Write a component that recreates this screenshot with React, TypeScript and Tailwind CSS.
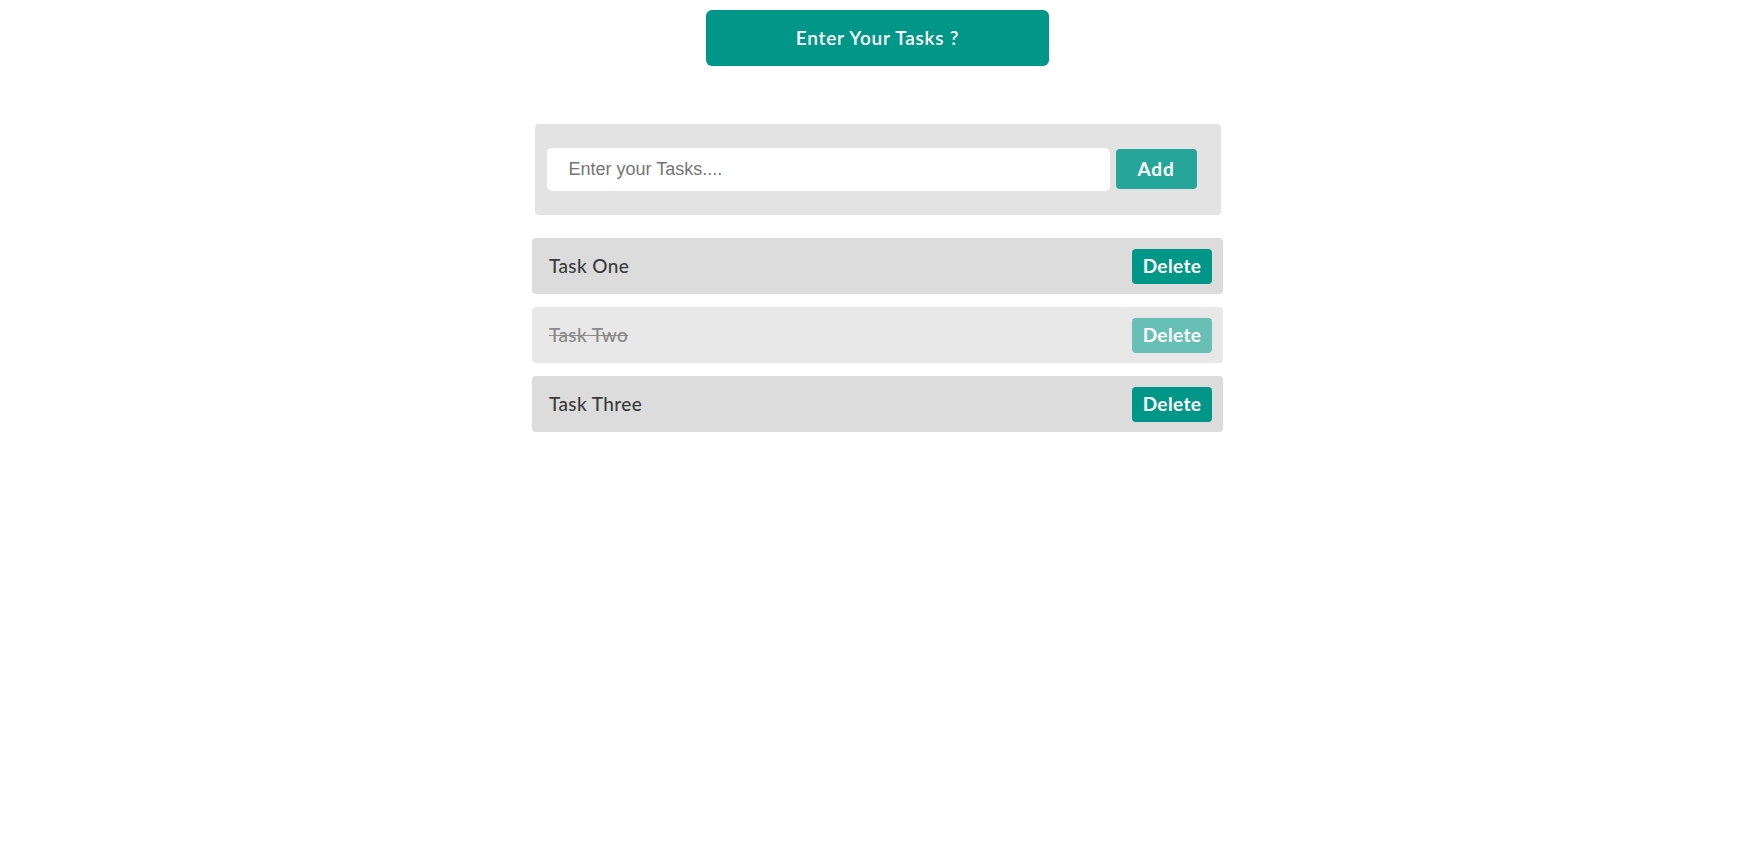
import { useState } from 'react'

interface Task {
  id: number
  text: string
  done: boolean
}

const initialTasks: Task[] = [
  { id: 1, text: 'Task One', done: false },
  { id: 2, text: 'Task Two', done: true },
  { id: 3, text: 'Task Three', done: false },
]

export default function App() {
  const [tasks, setTasks] = useState<Task[]>(initialTasks)
  const [value, setValue] = useState('')

  const addTask = () => {
    if (!value.trim()) return
    setTasks([...tasks, { id: Date.now(), text: value.trim(), done: false }])
    setValue('')
  }

  return (
    <div className="min-h-screen w-full bg-white font-['Lato','Liberation_Sans',sans-serif] flex flex-col items-center">
      {/* Title */}
      <div className="mt-[10px] w-[343px] h-[56px] rounded-[6px] bg-[#009688] flex items-center justify-center text-white text-[19px] tracking-[0.04em] font-semibold">
        Enter Your Tasks ?
      </div>

      {/* Input panel */}
      <div className="mt-[58px] w-[686px] h-[91px] rounded-[4px] bg-[#e3e3e3] pl-[12px] pt-[24px] flex items-start gap-[6px]">
        <input
          value={value}
          onChange={(e) => setValue(e.target.value)}
          placeholder="Enter your Tasks...."
          className="w-[563px] h-[43px] rounded-[5px] bg-white pl-[22px] text-[18px] text-[#333] font-['Liberation_Sans',Arial,sans-serif] placeholder:text-[#757575] outline-none"
        />
        <button
          onClick={addTask}
          className="mt-[1px] w-[81px] h-[40px] rounded-[4px] bg-[#26a69a] text-white text-[19px] tracking-[0.04em] font-bold"
        >
          Add
        </button>
      </div>

      {/* Task list */}
      <div className="mt-[23px] w-[691px] flex flex-col gap-[13px]">
        {tasks.map((t) => (
          <div
            key={t.id}
            className={`h-[56px] rounded-[4px] flex items-center justify-between pl-[17px] pr-[11px] ${
              t.done ? 'bg-[#e8e8e8]' : 'bg-[#dcdcdc]'
            }`}
          >
            <span
              onClick={() => setTasks(tasks.map((x) => (x.id === t.id ? { ...x, done: !x.done } : x)))}
              className={`text-[19px] tracking-[0.02em] font-medium cursor-pointer ${
                t.done ? 'line-through text-[#8a8a8a]' : 'text-[#3a3a3a]'
              }`}
            >
              {t.text}
            </span>
            <button
              onClick={() => setTasks(tasks.filter((x) => x.id !== t.id))}
              className={`w-[80px] h-[35px] rounded-[4px] text-white text-[19px] tracking-[0.02em] font-bold ${
                t.done ? 'bg-[#68bfb6]' : 'bg-[#009688]'
              }`}
            >
              Delete
            </button>
          </div>
        ))}
      </div>
    </div>
  )
}
